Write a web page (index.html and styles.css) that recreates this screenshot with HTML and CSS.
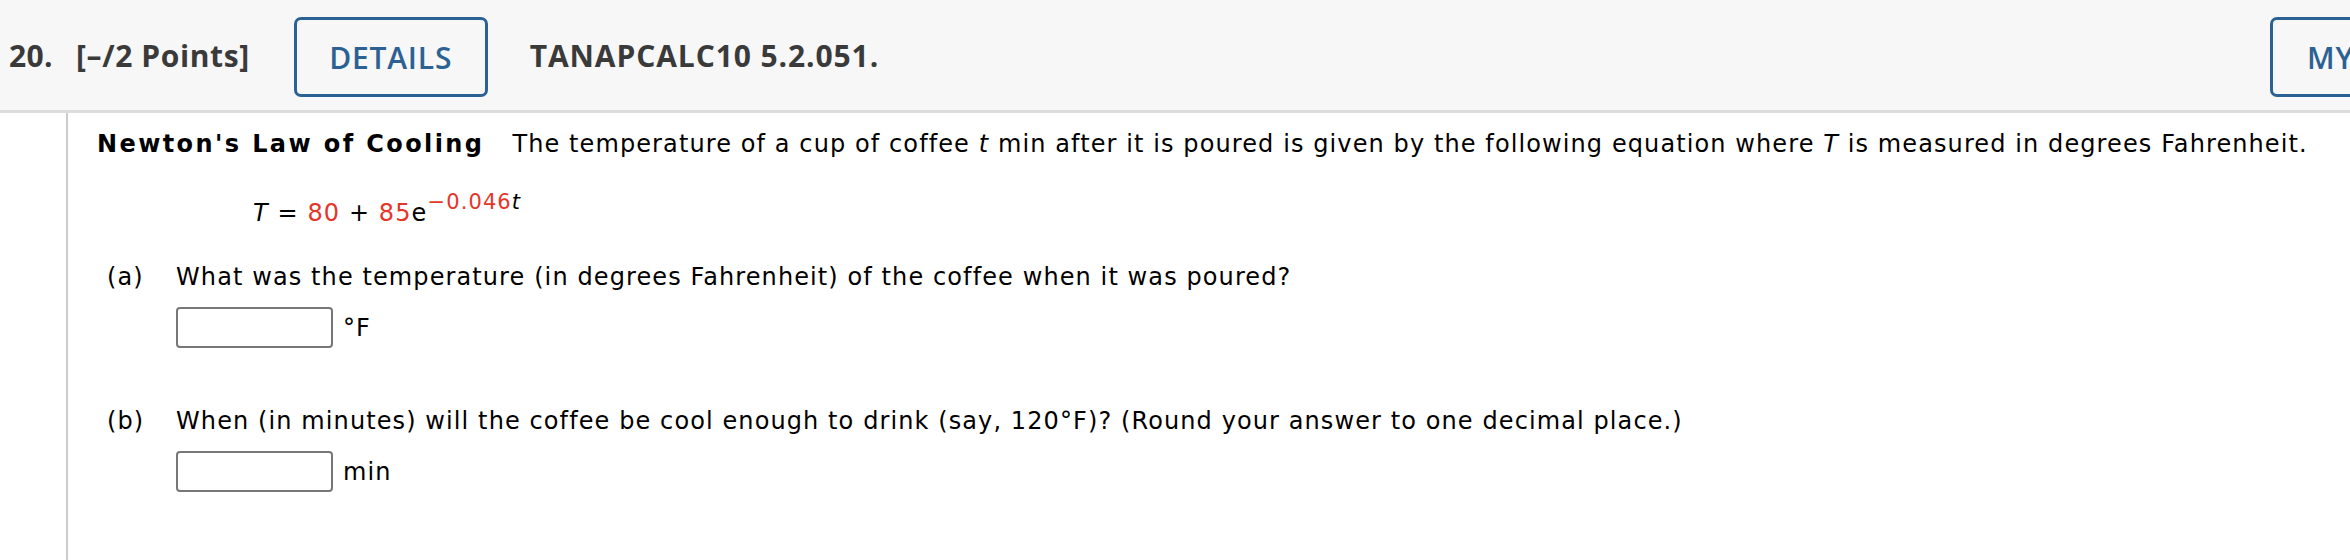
FILE: index.html
```html
<!DOCTYPE html>
<html>
<head>
<meta charset="utf-8">
<link rel="stylesheet" href="styles.css">
</head>
<body>
<div class="header">
  <span class="num">20.</span>
  <span class="points">[&ndash;/2 Points]</span>
  <span class="btn details">DETAILS</span>
  <span class="code">TANAPCALC10 5.2.051.</span>
  <span class="btn my">MY NOTES</span>
</div>
<div class="main">
  <div class="gutter"></div>
  <div class="content">
    <p class="intro"><b>Newton's Law of Cooling</b><span class="sp"></span>The temperature of a cup of coffee <i>t</i> min after it is poured is given by the following equation where <i>T</i> is measured in degrees Fahrenheit.</p>
    <p class="eq"><i>T</i> = <span class="red">80</span> + <span class="red">85</span>e<sup><span class="red">&minus;0.046</span><i>t</i></sup></p>
    <div class="part">
      <span class="lbl">(a)</span>
      <div class="body">
        <p class="q">What was the temperature (in degrees Fahrenheit) of the coffee when it was poured?</p>
        <div class="ans"><span class="box"></span><span class="unit">&deg;F</span></div>
      </div>
    </div>
    <div class="part partb">
      <span class="lbl">(b)</span>
      <div class="body">
        <p class="q">When (in minutes) will the coffee be cool enough to drink (say, 120&deg;F)? (Round your answer to one decimal place.)</p>
        <div class="ans"><span class="box"></span><span class="unit">min</span></div>
      </div>
    </div>
  </div>
</div>
</body>
</html>
```
FILE: styles.css
```css
html, body {
  margin: 0;
  padding: 0;
  background: #ffffff;
  overflow: hidden;
}
body {
  width: 2350px;
  height: 560px;
}
.header {
  display: flex;
  align-items: center;
  height: 110px;
  background: #f7f7f7;
  border-bottom: 3px solid #dddddd;
  padding-left: 9px;
  font-family: "Open Sans", sans-serif;
  font-size: 30px;
  font-weight: 700;
  color: #3a3a3a;
  white-space: nowrap;
}
.num {
  letter-spacing: 0.4px;
}
.points {
  margin-left: 23px;
  letter-spacing: 0.6px;
}
.btn {
  display: flex;
  align-items: center;
  justify-content: center;
  box-sizing: border-box;
  height: 80px;
  border: 3px solid #2b6193;
  border-radius: 7px;
  color: #2b6193;
  font-weight: 600;
  letter-spacing: 0.8px;
}
.details {
  width: 194px;
  margin-left: 44px;
  margin-top: 4px;
}
.code {
  margin-left: 42px;
  font-weight: 700;
  letter-spacing: 0.9px;
}
.my {
  margin-left: auto;
  margin-right: -200px;
  width: 280px;
  justify-content: flex-start;
  padding-left: 34px;
  margin-top: 4px;
}
.main {
  display: flex;
  height: 447px;
}
.gutter {
  width: 66px;
  flex: none;
  border-right: 2px solid #cccccc;
}
.content {
  padding-left: 29px;
  padding-top: 13px;
  font-family: "DejaVu Sans", Verdana, sans-serif;
  font-size: 24px;
  letter-spacing: 1.1px;
  color: #000000;
}
p {
  margin: 0;
}
.intro {
  white-space: nowrap;
  line-height: 36px;
}
.intro b {
  letter-spacing: 2.4px;
}
.sp {
  display: inline-block;
  width: 28px;
}
.eq {
  margin-top: 33px;
  margin-left: 156px;
  line-height: 36px;
}
.eq sup {
  font-size: 21px;
  vertical-align: 12px;
  line-height: 0;
}
.red {
  color: #e5362a;
}
.part {
  display: flex;
  margin-top: 28px;
}
.partb {
  margin-top: 55px;
}
.lbl {
  width: 69px;
  flex: none;
  padding-left: 10px;
  line-height: 36px;
}
.q {
  line-height: 36px;
  white-space: nowrap;
}
.ans {
  display: flex;
  align-items: center;
  margin-top: 12px;
}
.box {
  display: block;
  width: 157px;
  height: 41px;
  box-sizing: border-box;
  border: 2px solid #777777;
  border-radius: 4px;
  background: #ffffff;
}
.unit {
  margin-left: 10px;
  line-height: 36px;
}
```
